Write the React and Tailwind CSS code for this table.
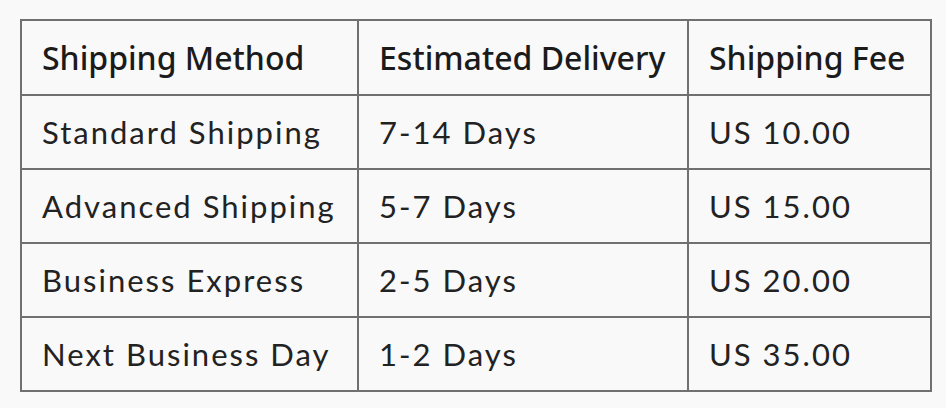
const rows = [
  ["Standard Shipping", "7-14 Days", "US 10.00"],
  ["Advanced Shipping", "5-7 Days", "US 15.00"],
  ["Business Express", "2-5 Days", "US 20.00"],
  ["Next Business Day", "1-2 Days", "US 35.00"],
];

const App = () => {
  return (
    <div className="w-[946px] h-[408px] bg-[#f9f9f9] pl-5 pt-[19px]">
      <table className="table-fixed border-collapse w-[910px] text-[#1b1b1b]">
        <colgroup>
          <col className="w-[337px]" />
          <col className="w-[330px]" />
          <col className="w-[243px]" />
        </colgroup>
        <thead>
          <tr className="h-[75px]">
            <th className="border-2 border-[#707070] px-5 text-left font-medium text-[32px] font-['Noto_Sans',sans-serif]">
              Shipping Method
            </th>
            <th className="border-2 border-[#707070] px-5 text-left font-medium text-[32px] font-['Noto_Sans',sans-serif]">
              Estimated Delivery
            </th>
            <th className="border-2 border-[#707070] px-5 text-left font-medium text-[32px] font-['Noto_Sans',sans-serif]">
              Shipping Fee
            </th>
          </tr>
        </thead>
        <tbody>
          {rows.map((r) => (
            <tr key={r[0]} className="h-[74px]">
              {r.map((c) => (
                <td
                  key={c}
                  className="border-2 border-[#707070] px-5 text-[31px] tracking-[0.065em] text-[#222] font-['Lato',sans-serif]"
                >
                  {c}
                </td>
              ))}
            </tr>
          ))}
        </tbody>
      </table>
    </div>
  );
};

export default App;
